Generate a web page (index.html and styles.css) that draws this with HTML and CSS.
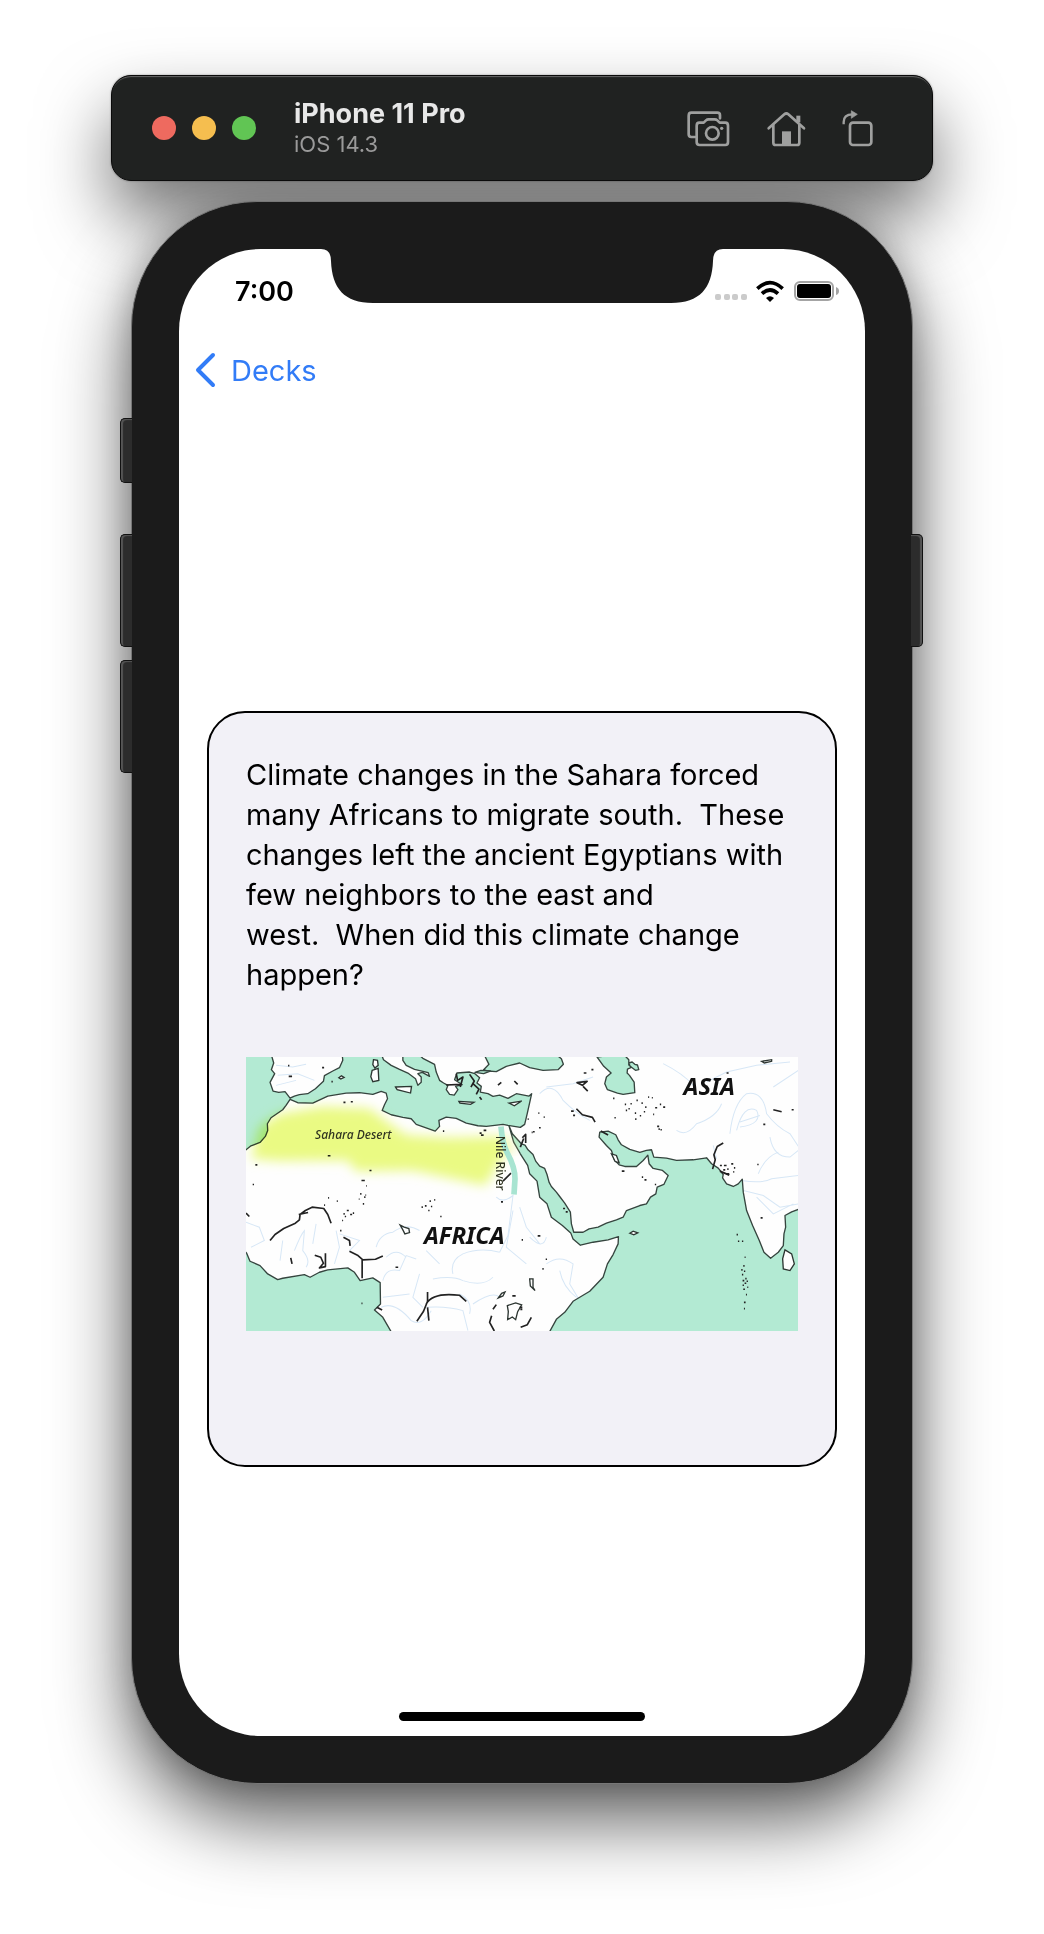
FILE: index.html
```html
<!DOCTYPE html>
<html lang="en">
<head>
<meta charset="utf-8">
<meta name="viewport" content="width=device-width, initial-scale=1">
<title>iPhone 11 Pro</title>
<link rel="stylesheet" href="styles.css">
</head>
<body>
<div class="simulator">
  <header class="toolbar">
    <div class="lights">
      <button class="light light-close" aria-label="Close"></button>
      <button class="light light-min" aria-label="Minimize"></button>
      <button class="light light-zoom" aria-label="Zoom"></button>
    </div>
    <div class="device">
      <h1 class="device-name">iPhone 11 Pro</h1>
      <p class="device-os">iOS 14.3</p>
    </div>
    <div class="tools">
      <button class="tool" aria-label="Screenshot">
        <svg width="45" height="38" viewBox="50 38 135 114" fill="none" stroke="currentColor" stroke-width="8" stroke-linejoin="round" stroke-linecap="round">
          <path d="M152 66V57q0-8-8-8H66q-8 0-8 9v56q0 8 8 8h12"/>
          <path d="M90 79h13l7-7q3-3 8-3h18q5 0 8 3l7 7h17q8 0 8 9v49q0 9-8 9H91q-9 0-9-9V88q0-9 8-9z"/>
          <circle cx="129" cy="111" r="19"/>
          <circle cx="157" cy="96" r="5" fill="currentColor" stroke="none"/>
        </svg>
      </button>
      <button class="tool" aria-label="Home">
        <svg width="40" height="38" viewBox="290 38 120 114" fill="none" stroke="currentColor" stroke-width="8" stroke-linejoin="round" stroke-linecap="round">
          <path d="M298 96l47-42q6-5 12 0l47 42"/>
          <path d="M312 86v53q0 7 7 7h64q7 0 7-7V86"/>
          <path d="M387 58v20" stroke-width="12" stroke-linecap="butt"/>
          <path d="M338 146v-41h27v41z" fill="currentColor" stroke="none"/>
        </svg>
      </button>
      <button class="tool" aria-label="Rotate">
        <svg width="34" height="38" viewBox="514 38 102 114" fill="none" stroke="currentColor" stroke-width="8" stroke-linejoin="round">
          <rect x="541" y="79" width="64" height="67" rx="9"/>
          <path d="M522 84v-7q0-23 26-23" stroke-width="7"/>
          <path d="M545 43l18 11-18 12z" fill="currentColor" stroke-width="2"/>
        </svg>
      </button>
    </div>
  </header>

  <div class="phone">
    <span class="side-key key-mute"></span>
    <span class="side-key key-up"></span>
    <span class="side-key key-down"></span>
    <span class="side-key key-power"></span>
    <div class="screen">
      <svg class="notch" width="402" height="56" viewBox="0 0 402 56"><path fill="#1b1b1b" d="M0 0V1Q10 1 10 13C11 40 23 55 52 55H350C379 55 391 40 392 13Q392 1 402 1V0z"/></svg>
      <div class="status">
        <span class="time">7:00</span>
        <div class="indicators">
          <svg width="32" height="24" viewBox="0 0 32 24" fill="#cbcbcb"><rect y="15" width="6" height="6" rx="2"/><rect x="9" y="15" width="6" height="6" rx="2"/><rect x="17" y="15" width="6" height="6" rx="2"/><rect x="26" y="15" width="6" height="6" rx="2"/></svg>
          <svg width="28" height="24" viewBox="0 0 84 72" fill="none" stroke="#000" stroke-width="11"><path d="M4 29Q42-7 80 29"/><path d="M18 44Q42 22 66 44"/><path d="M30 57Q42 46 54 57L42 69z" fill="#000" stroke="none"/></svg>
          <svg width="46" height="24" viewBox="0 0 46 24"><rect x="2" y="3" width="38" height="18" rx="5" fill="none" stroke="#a4a4a4" stroke-width="2"/><rect x="4" y="5" width="34" height="14" rx="3"/><path d="M43 8q3 1 3 4t-3 4z" fill="#a4a4a4"/></svg>
        </div>
      </div>
      <nav class="nav">
        <a class="back" href="#decks">
          <svg width="22" height="36" viewBox="0 0 22 36" fill="none" stroke="currentColor" stroke-width="4" stroke-linecap="round" stroke-linejoin="round"><path d="M18 3L3 18l15 15"/></svg>
          <span>Decks</span>
        </a>
      </nav>
      <main class="content">
        <article class="card">
          <p class="question">Climate changes in the Sahara forced many Africans to migrate south.&nbsp; These changes left the ancient Egyptians with few neighbors to the east and west.&nbsp;&nbsp;When did this climate change happen?</p>
          <svg class="map" viewBox="20 20 1654 822" role="img" aria-label="Map of Africa and Asia">
            <defs><filter id="soft" x="-10%" y="-20%" width="120%" height="140%"><feGaussianBlur stdDeviation="17"/></filter></defs>
            <rect x="20" y="20" width="1654" height="822" fill="#fefefe"/>
            <!-- rivers -->
            <g class="river">
              <path d="M110 45l50 5 40-8M115 75l60-5 50 20M110 105l60-15M20 515l40 15 15 40-40 20M130 570l-8 60M165 600q20-50 30-60l-5 60q25 30 10 50M290 540l10 50-15 50M230 520l-10 60M300 550l60 20-30 30M410 590q10-40 50-45 40-30 80-5M430 690q10-40 50-30l20-45 30 10M500 620q-30-30-60 0M560 600l40 40M640 670q-10-40 30-60 50-20 110-5M580 685q60-10 90 5 60 20 90-10M560 770q60-5 110 10l15 60M425 770q40-20 90 40 30 20 60-30M660 730q40 20 30 60M700 760q60-40 80-20M770 440q20 20 50-5l-15 120-25 50M840 470l20 60 40 50M430 740l80-10M540 670l-20 70 30 30"/>
              <path d="M860 640l-60-50 20-110M920 640q40-30 80 0l-10 60 30 50M960 660q10 50 50 80M870 560q40 40 50 0M920 110l80-10 60-20M900 130q40-40 70 20 40 40 80 60M1270 40q60 30 90 65M1400 95l60-30 90-20 100-10M1600 110l75-50M1310 240q30 20 60-20 60-20 75-60M1470 250q10-90 50-120 50-10 60 60 30 40 70 60l40 60M1490 240q20-80 60-60 20 40-50 50M1500 215l60-20M1590 260q10 60 60 60l25-20M1505 390q60 10 90-5l80-10M1510 420l60 15 50 35 55-10M1550 440l50 50 60-30M1555 370q20-50 60-65M1420 285l10 40"/>
            </g>
            <!-- seas -->
            <g class="sea">
              <path d="M10 10H95L103 38 96 58 106 70 92 96 101 122 118 126 137 124 152 143 165 137 180 133 205 130 228 115 252 93 255 76 280 62 300 52 310 30 308 10H425L432 28 455 45 480 57 505 68 528 85 535 105 545 96 545 80 535 70 548 66 570 78 566 67 525 57 500 45 490 30V10H535L550 24 585 42 590 65 600 90 612 98 625 105 620 118 630 132 644 134 655 118 648 108 668 103 645 88 652 68 690 65 706 70 720 82 712 98 725 108 722 125 745 130 760 138 780 134 805 144 830 130 868 137 876 130 863 188 855 222 842 231 805 225 790 222 740 228 715 226 680 218 650 204 620 200 598 210 600 228 587 242 530 222 515 205 490 201 455 193 428 180 435 163 444 145 440 128 425 123 400 132 360 127 320 128 265 137 220 158 175 157 152 147 140 165 130 178 95 202 84 220 85 240 78 258 62 276 35 286 20 298 10 302z"/>
              <path d="M732 10L748 42 732 58 745 62 770 64 800 48 840 38 870 52 910 60 955 58 971 42 965 25 945 10z"/>
              <path d="M706 66l18-6 28 2-20 8z"/>
              <path d="M1072 20l20 28 22 20-14 12-5 20 8 18 30 10 17 4 35-5-2-32-14-20-7-7 1-12 10-4-6-14 10-3 8 7 8 2 4 14-10 2-10-8-10-8V28l-12-12h-50z"/>
              <path d="M808 226L818 250 845 280 856 284 865 298 880 312 888 332 900 347 915 354 922 372 928 395 935 408 950 425 960 438 975 458 992 485 995 520 1002 545 1030 545 1048 535 1075 530 1100 518 1130 508 1150 500 1160 480 1200 465 1220 460 1232 440 1248 430 1252 410 1272 402 1285 375 1268 360 1240 354 1228 340 1224 314 1210 330 1190 348 1155 348 1138 343 1124 328 1115 300 1100 285 1078 260 1080 245 1105 242 1128 253 1135 268 1145 283 1170 297 1200 306 1220 300 1235 298 1242 320 1280 323 1310 330 1360 328 1400 322 1415 340 1435 353 1450 372 1448 382 1460 400 1480 408 1495 400 1507 386 1510 425 1520 480 1538 525 1558 570 1572 605 1592 623 1615 605 1630 585 1632 550 1637 530 1635 495 1655 484 1684 473V852H925L950 806 975 785 1000 752 1050 722 1090 680 1103 640 1120 612 1135 580 1136 558 1105 568 1060 575 1022 584 1000 565 993 547 968 525 935 500 922 460 900 440 892 392 870 370 864 345 842 310 822 275z"/>
              <path d="M10 595L22 608 32 632 62 645 85 670 115 687 130 683 195 672 212 680 240 665 265 658 325 652 345 665 362 690 400 682 422 696 423 760 405 778 430 800 460 852H10z"/>
            </g>
            <!-- islands and lakes -->
            <g class="island">
              <path d="M1635 598l20 12 8 30-13 20-20-5-2-30zM398 60l18-6 2 36-18 4-6-15zM402 28l12 2 2 15-10 8-6-10zM468 110l48-2-3 20-40-10zM658 153l45 3-10 6-32-4zM808 158l38-6-22 14zM298 82l8-6 8 5-10 5zM1115 310l15 5 8 22-12-4zM1170 548l10-6 14 5-12 6z"/>
              <path d="M803 765l25-8 18 6-12 20-6 24-10-8-14 8 2-24zM482 524l12 6 14 4 2 12-14 4-6-12zM870 685h10v25l6 10-14-14zM776 742l10-14 10-4-6 12zM1565 33l30-5v5l-22 5z" fill="none"/>
            </g>
            <!-- borders and wadis -->
            <g class="ink">
              <path d="M92 570l15-18 26-18 35-16 12-10 2-16 16-12 20-10 35 4 12 18 10 26M178 492l28-6M312 560l18 10 2 16M330 602l24 12 16 14 38-2 22-10M368 628v55M226 614l18 6 8 18-12 14 18-4V608M154 622l4 18M532 812l20-30 12-30V724M564 770l4 40M560 760q20-36 100-26l20 18M790 392l24-24M848 262l10-10v26M842 290l10-26M1083 242l22 12M770 762l-10 14M756 795l-6 20 14 26M20 488l10 10M843 830l20-8 12-22M1010 175l18 18 30 8 8 14M1450 278l-18 10-10 25 4 15-8 28M1440 362l28 12M1600 178l25 6M1028 105l14-12-30 4zM1030 108l14 14M412 770l16 8"/>
              <path d="M650 70l4 20 16-10-8 30M690 72l14 20-10 18M700 100l18 16-8 16M620 104l44-2M785 96l-10 8M824 92l10 10M720 140l6 8"/>
              <path class="dots" d="M146 46h4M148 78h10M248 52h6M276 94h4M312 156h6M334 154h6M48 343h6M40 402h4M265 316h8M366 390h10M380 406h2M362 430h4M374 440h4M358 446h2M370 460h4M378 434h2M266 442h3M292 452h3M254 464h3M312 490h4M322 480h6M332 492h6M308 510h3M316 498h4M340 488h4M302 540h4M570 452h4M584 448h3M556 466h5M566 480h4M546 470h4M574 468h4M602 498h4M468 650h8M784 454h6M720 248h6M732 240h8M724 254h8M610 242h4M818 736h10M846 568h4M366 758h3M390 360h6"/>
              <path class="dots" d="M1155 162h4M1166 175h4M1190 150h4M1205 158h4M1216 170h4M1225 140h3M1236 142h3M1246 172h6M1260 162h4M1270 170h6M1185 188h4M1200 196h4M1212 184h4M1240 192h3M1158 180h4M1172 160h4M1186 206h4M1124 202h4M1120 144h4M1252 228h6M1262 238h4M1256 236h4M1032 68h8M1055 58h6M994 182h8M1000 195h6M896 188h3M912 200h3M864 206h3M898 232h5M880 244h5M876 246h3M1146 362h8M1206 380h4M1214 388h6M1245 402h4M970 474h6M978 484h6M894 556h8M918 626h4M908 655h4M840 770h8M842 776h6M1440 345h6M1452 345h8M1450 358h6M1462 356h4M1474 340h6M1482 352h4M1480 364h3M1460 370h8M1552 342h4M1570 222h6M1655 178h6M1562 502h6M1460 68h6M1490 552h4M1494 572h4M1506 572h4"/>
              <path class="dots" d="M1514 620h3M1510 646h4M1504 658h4M1512 662h4M1506 672h4M1516 684h4M1508 690h5M1514 698h5M1508 704h4M1520 692h4M1510 716h5M1522 710h3M1518 732h3M1512 755h5M1512 774h3"/>
            </g>
            <path class="desert" filter="url(#soft)" d="M60 230L120 190 250 168 390 174 440 212 500 254 620 262 800 258 806 300 770 350 738 405 640 385 520 360 350 362 325 330 120 332 35 325z"/>
            <path d="M808 262l26 30-10 14z" fill="#e9ef8e" filter="url(#soft)"/>
            <path d="M784 228Q788 280 804 310 826 350 826 385L823 432" fill="none" stroke="#a8e4d1" stroke-width="17"/>
            <text class="label" x="227" y="267" font-size="36">Sahara Desert</text>
            <text class="label label-river" transform="translate(769 256) rotate(90)" font-size="36">Nile River</text>
            <text class="label label-land" x="553" y="579" font-size="71">AFRICA</text>
            <text class="label label-land" x="1331" y="135" font-size="71">ASIA</text>
          </svg>
        </article>
      </main>
      <div class="home-area"><span class="home-bar"></span></div>
    </div>
  </div>
</div>
</body>
</html>
```

FILE: styles.css
```css
* {
  box-sizing: border-box;
}

body {
  margin: 0;
  background: #fff;
  color: #000;
  font-family: Inter, "Liberation Sans", sans-serif;
}

h1,
p {
  margin: 0;
}

button {
  padding: 0;
  border: 0;
  background: none;
}

svg {
  display: block;
}

.simulator {
  display: flex;
  flex-direction: column;
  align-items: center;
  gap: 20px;
  padding: 75px 20px 148px;
  overflow: hidden;
}

.toolbar {
  position: relative;
  z-index: 1;
  display: flex;
  align-items: center;
  width: 100%;
  max-width: 822px;
  min-height: 106px;
  padding: 0 57px 0 40px;
  border: 1px solid #0a0a0a;
  border-radius: 20px;
  background: #202221;
  box-shadow: inset 0 2px 1px -1px #666, 0 0 2px rgba(0, 0, 0, 0.4);
}

.lights {
  display: flex;
  gap: 16px;
}

.light {
  width: 24px;
  height: 24px;
  border-radius: 50%;
}

.light-close {
  background: #ee6a5f;
}

.light-min {
  background: #f5be4f;
}

.light-zoom {
  background: #61c554;
}

.device {
  flex: 1;
  padding-left: 38px;
}

.device-name {
  color: #e8e8e8;
  font-size: 27px;
  font-weight: 700;
  line-height: 32px;
}

.device-os {
  color: #9a9a9a;
  font-size: 22px;
  line-height: 28px;
}

.tools {
  display: flex;
  gap: 35px;
  color: #9fa09f;
}

.tool {
  color: inherit;
}

.phone {
  position: relative;
  width: 100%;
  max-width: 782px;
  padding: 47px;
  border: 1px solid #777;
  border-radius: 126px;
  background: #1b1b1b;
  box-shadow: 0 36px 76px rgba(0, 0, 0, 0.64), 0 0 30px rgba(0, 0, 0, 0.18);
}

/* Shadow that the toolbar throws on the desktop, under the phone */
.phone::before {
  content: "";
  position: absolute;
  top: -127px;
  left: -21px;
  right: -21px;
  z-index: -1;
  height: 106px;
  border-radius: 20px;
  box-shadow: 0 36px 70px rgba(0, 0, 0, 0.55);
}

.side-key {
  position: absolute;
  left: -12px;
  width: 12px;
  height: 113px;
  border: 1px solid #111;
  border-right: 0;
  border-radius: 5px 0 0 5px;
  background: #2c2c2c;
  box-shadow: inset 2px 1px 1px #555;
}

.key-mute {
  top: 216px;
  height: 65px;
}

.key-up {
  top: 332px;
}

.key-down {
  top: 458px;
}

.key-power {
  top: 332px;
  left: auto;
  right: -11px;
  border-right: 1px solid #111;
  border-left: 0;
  border-radius: 0 5px 5px 0;
  box-shadow: inset -2px 1px 1px #555;
}

.screen {
  position: relative;
  display: flex;
  flex-direction: column;
  border-radius: 82px;
  background: #fff;
}

.notch {
  position: absolute;
  top: -1px;
  left: 50%;
  transform: translateX(-50%);
}

.status {
  display: flex;
  align-items: center;
  justify-content: space-between;
  height: 84px;
  padding: 0 26px 0 56px;
}

.time {
  font-size: 27px;
  font-weight: 600;
}

.indicators {
  display: flex;
  align-items: center;
  gap: 9px;
}

.nav {
  display: flex;
  align-items: center;
  height: 74px;
  padding: 0 16px;
}

.back {
  display: flex;
  align-items: center;
  gap: 14px;
  color: #327cf7;
  font-size: 29px;
  text-decoration: none;
}

.content {
  flex: 1;
  padding: 304px 28px 207px;
}

.card {
  padding: 42px 37px 134px;
  border: 2px solid #000;
  border-radius: 38px;
  background: #f2f1f7;
}

.question {
  margin-bottom: 62px;
  font-size: 29px;
  line-height: 40px;
}

.map {
  width: 100%;
  height: auto;
}

.river {
  fill: none;
  stroke: #d7e7f6;
  stroke-width: 3;
}

.sea {
  fill: #b3ead3;
  stroke: #35443e;
  stroke-width: 4;
  stroke-linejoin: round;
}

.island {
  fill: #fefefe;
  stroke: #2c3531;
  stroke-width: 4;
}

.ink {
  fill: none;
  stroke: #222;
  stroke-width: 5;
  stroke-linejoin: round;
}

.dots {
  stroke-width: 5;
}

.desert {
  fill: #ebfb84;
  mix-blend-mode: multiply;
}

.label {
  fill: #2f3320;
  font-family: "Noto Sans", "Open Sans", sans-serif;
  font-style: italic;
  font-weight: 500;
}

.label-river {
  font-style: normal;
}

.label-land {
  fill: #111;
  font-weight: 700;
}

.home-area {
  display: flex;
  align-items: flex-end;
  justify-content: center;
  height: 62px;
  padding-bottom: 15px;
}

.home-bar {
  width: 246px;
  height: 9px;
  border-radius: 5px;
  background: #000;
}
```
